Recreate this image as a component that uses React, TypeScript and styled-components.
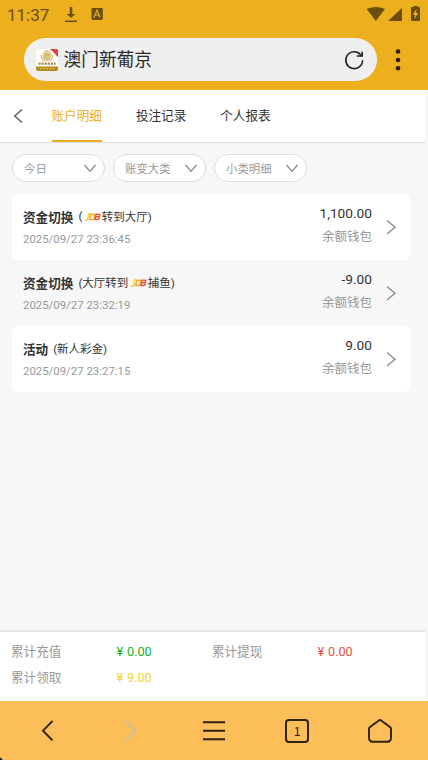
import React from "react";
import styled, { createGlobalStyle } from "styled-components";

const GlobalStyle = createGlobalStyle`
  * { box-sizing: border-box; }
  body {
    margin: 0;
    font-family: Roboto, "Noto Sans CJK SC", sans-serif;
    background: #f7f7f7;
    overflow: hidden;
  }
`;

const Screen = styled.div`
  display: flex;
  flex-direction: column;
  width: 428px;
  height: 760px;
  background: #f7f7f7;
`;

const BrowserTop = styled.header`
  flex: none;
  height: 90px;
  background: #ecb01f;
`;

const StatusBar = styled.div`
  display: flex;
  align-items: center;
  height: 28px;
  padding: 0 8px 0 7px;
  color: #6b4e0b;
`;

const Clock = styled.span`
  width: 57px;
  padding-top: 1px;
  font-size: 17px;
  line-height: 22px;
`;

const StatusIcons = styled.svg`
  display: block;
`;

const StatusSpacer = styled.div`
  flex: 1;
`;

const AddressRow = styled.div`
  display: flex;
  align-items: center;
  padding: 10px 0 0 24px;
`;

const AddressPill = styled.div`
  display: flex;
  align-items: center;
  width: 353px;
  height: 43px;
  padding: 0 12px;
  border-radius: 22px;
  background: #efefef;
`;

const SiteTitle = styled.span`
  flex: 1;
  padding-left: 5.5px;
  color: #292929;
  font-size: 17.7px;
  line-height: 24px;
  font-weight: 400;
  white-space: nowrap;
`;

const MoreButton = styled.button`
  display: flex;
  margin-left: 15px;
  padding: 0;
  border: 0;
  background: none;
`;

const Page = styled.main`
  flex: 1;
  display: flex;
  flex-direction: column;
  width: 425px;
  min-height: 0;
`;

const TabBar = styled.nav`
  display: flex;
  height: 53px;
  padding-left: 13px;
  border-bottom: 1px solid #dedede;
  background: #fff;
`;

const BackButton = styled.button`
  display: flex;
  align-items: center;
  width: 38.5px;
  padding: 0;
  border: 0;
  background: none;
`;

const Tab = styled.a<{ $active?: boolean }>`
  height: 52px;
  margin-right: 34px;
  border-bottom: 2px solid ${(p) => (p.$active ? "#ebae20" : "transparent")};
  color: ${(p) => (p.$active ? "#ebae20" : "#333")};
  font-size: 12.6px;
  line-height: 51px;
  white-space: nowrap;
`;

const Filters = styled.div`
  display: flex;
  gap: 8px;
  padding: 11px 0 12px 11.5px;
`;

const FilterPill = styled.button`
  display: flex;
  align-items: center;
  justify-content: space-between;
  width: 93px;
  height: 28px;
  padding: 1px 7px 0 11.5px;
  border: 1px solid #dedede;
  border-radius: 14px;
  background: #fff;
  color: #999;
  font-family: inherit;
  font-size: 11.4px;
  line-height: 26px;
`;

const Records = styled.div`
  flex: 1;
  width: 398.5px;
  margin-left: 11.5px;
`;

const Record = styled.article<{ $shaded?: boolean }>`
  display: flex;
  height: 66px;
  padding: 0 13px 0 11.5px;
  border-radius: 6px;
  background: ${(p) => (p.$shaded ? "transparent" : "#fff")};
`;

const RecordInfo = styled.div`
  flex: 1;
  padding-top: 12px;
`;

const RecordTitle = styled.div`
  display: flex;
  align-items: center;
  height: 20px;
  color: #333;
  font-size: 11.5px;
  white-space: nowrap;
`;

const RecordKind = styled.strong`
  margin-right: 5px;
  font-size: 12.6px;
  font-weight: 700;
`;

const RecordNote = styled.span`
  display: flex;
  align-items: center;
  height: 18px;
`;

const RecordTime = styled.time`
  display: block;
  padding-top: 6px;
  color: #999;
  font-size: 11.4px;
  line-height: 14px;
`;

const RecordSum = styled.div`
  padding: 9px 12px 0 0;
  text-align: right;
`;

const Amount = styled.div`
  color: #333;
  font-size: 13.7px;
  line-height: 20px;
`;

const Wallet = styled.div`
  padding-top: 4px;
  color: #999;
  font-size: 12.5px;
  line-height: 20px;
`;

const Arrow = styled.svg`
  align-self: center;
`;

const LogoMark = styled.svg`
  display: block;
  margin: 1px 0.5px 0 -1px;
`;

const Totals = styled.section`
  display: grid;
  grid-template-columns: 105.5px 95.5px 105.5px 1fr;
  grid-auto-rows: 26px;
  height: 71px;
  padding: 7px 0 0 11px;
  border-top: 2px solid #e2e2e2;
  background: #fff;
`;

const TotalLabel = styled.span`
  color: #999;
  font-size: 12.6px;
  line-height: 25px;
`;

const TotalValue = styled.span<{ $color: string }>`
  display: flex;
  align-items: center;
  height: 25px;
  color: ${(p) => p.$color};
  font-size: 12.7px;
`;

const Yen = styled.span`
  width: 10.5px;
`;

const BottomNav = styled.nav`
  flex: none;
  display: flex;
  align-items: center;
  height: 59px;
  padding: 0 6px;
  background: linear-gradient(225deg, #fcbe59 calc(100% - 2.5px), #14201c calc(100% - 1.5px));
`;

const NavButton = styled.button`
  flex: 1;
  display: flex;
  justify-content: center;
  padding: 0;
  border: 0;
  background: none;
`;

const TabCount = styled.span`
  width: 24px;
  height: 24px;
  border: 2px solid #2c2311;
  border-radius: 4px;
  color: #2c2311;
  font: 12.5px/19px "Noto Sans CJK SC", sans-serif;
`;

const SiteLogo = () => (
  <svg width="22" height="22" viewBox="0 0 22 22">
    <rect width="22" height="22" rx="2" fill="#fffdf6" />
    <path d="M14 0h6q2 0 2 2v6z" fill="#d72835" />
    <path d="M16 1l5 5M18 0l4 4" stroke="#f4b1aa" strokeWidth=".6" />
    <ellipse cx="11" cy="6.5" rx="4" ry="5" fill="#f2e5b6" stroke="#c6aa58" strokeWidth=".8" />
    <path d="M9 4v6M11 3v8M13 4v6M9 6h4M5 6q0 5 4 6.3M17 6q0 5-4 6.3" fill="none" stroke="#b99a43" strokeWidth=".8" />
    <path d="M2.5 14.7h17" stroke="#a38c55" strokeWidth="2.2" strokeDasharray="2.2 .9" />
    <path d="M0 17.5h22v2.5q0 2-2 2H2q-2 0-2-2z" fill="#b48c1c" />
    <path d="M4 19.7h14" stroke="#d9b950" strokeWidth="1.2" strokeDasharray="2 1" />
  </svg>
);

const JdbLogo = () => (
  <LogoMark width="17" height="11" viewBox="0 0 17 11">
    <g fill="none" strokeWidth="1.4">
      <path d="M5.2 1.8L3.8 8Q3.3 9.8 1 9.6" stroke="#fac51c" />
      <path d="M6.9 3.2h3q1 0 .8 1.3l-.6 2.8q-.3 1.2-1.4 1.2h-3z" stroke="#f8a824" />
      <path d="M12.1 3.2h2.9q1.1 0 .9 1.1-.2 1.3-1.3 1.4h-2.8 2.5q1.2.1 1 1.3-.3 1.5-1.5 1.5h-2.9z" stroke="#ec5340" />
    </g>
  </LogoMark>
);

const Chevron = () => (
  <svg width="14" height="9" viewBox="0 0 14 9">
    <path d="M1.5 1L7 7.3 12.5 1" fill="none" stroke="#858585" strokeWidth="1.2" />
  </svg>
);

type Entry = {
  kind: string;
  before: string;
  logo?: boolean;
  after?: string;
  time: string;
  amount: string;
};

const entries: Entry[] = [
  { kind: "资金切换", before: "(\u00a0", logo: true, after: "转到大厅)", time: "2025/09/27 23:36:45", amount: "1,100.00" },
  { kind: "资金切换", before: "(大厅转到\u00a0", logo: true, after: "捕鱼)", time: "2025/09/27 23:32:19", amount: "-9.00" },
  { kind: "活动", before: "(新人彩金)", time: "2025/09/27 23:27:15", amount: "9.00" },
];

const totals = [
  { label: "累计充值", value: "0.00", color: "#13b51c" },
  { label: "累计提现", value: "0.00", color: "#e35247" },
  { label: "累计领取", value: "9.00", color: "#f4d329" },
];

export default function App() {
  return (
    <Screen>
      <GlobalStyle />
      <BrowserTop>
        <StatusBar>
          <Clock>11:37</Clock>
          <StatusIcons width="40" height="28" viewBox="0 0 40 28">
            <path d="M1 21.3h12" stroke="currentColor" strokeWidth="1.5" fill="none" />
            <path d="M5.7 7h2.6v7h3L7 18l-4.3-4h3z" fill="currentColor" />
            <rect x="27.5" y="8" width="11.3" height="12" rx="1" fill="currentColor" />
            <path d="M30 17.5l3-7.5 3 7.5M31 15h4" stroke="#ecb01f" strokeWidth="1.2" fill="none" />
          </StatusIcons>
          <StatusSpacer />
          <StatusIcons width="54" height="28" viewBox="0 0 54 28">
            <path d="M.7 9Q9.8 5 18.9 9L9.8 21zM36 8v13H22z" fill="currentColor" />
            <path d="M45 8q0-1 1-1h1.5V6h4v1H53q1 0 1 1v12q0 1-1 1h-7q-1 0-1-1z" fill="currentColor" />
            <path d="M50.3 9l-3.5 6h2.1l-.4 4 3.7-6h-2z" fill="#ecb01f" />
          </StatusIcons>
        </StatusBar>
        <AddressRow>
          <AddressPill>
            <SiteLogo />
            <SiteTitle>澳门新葡京</SiteTitle>
            <svg width="22" height="22" viewBox="0 0 22 22">
              <path d="M19.6 11.2A8.4 8.4 0 1 1 17.5 5.6L19.2 7" fill="none" stroke="#242424" strokeWidth="1.6" />
              <path d="M19.2 2.7V7h-5.4" fill="none" stroke="#242424" strokeWidth="1.6" />
            </svg>
          </AddressPill>
          <MoreButton aria-label="menu">
            <svg width="12" height="24" viewBox="0 0 12 24" fill="#272212">
              <circle cx="6" cy="3.5" r="2.3" />
              <circle cx="6" cy="12" r="2.3" />
              <circle cx="6" cy="20.3" r="2.3" />
            </svg>
          </MoreButton>
        </AddressRow>
      </BrowserTop>

      <Page>
        <TabBar>
          <BackButton aria-label="back">
            <svg width="12" height="16" viewBox="0 0 12 16">
              <path d="M9 1.5L1.8 8 9 14.5" fill="none" stroke="#666" strokeWidth="1.6" />
            </svg>
          </BackButton>
          <Tab $active>账户明细</Tab>
          <Tab>投注记录</Tab>
          <Tab>个人报表</Tab>
        </TabBar>

        <Filters>
          {["今日", "账变大类", "小类明细"].map((name) => (
            <FilterPill key={name}>
              {name}
              <Chevron />
            </FilterPill>
          ))}
        </Filters>

        <Records>
          {entries.map((e, i) => (
            <Record key={e.time} $shaded={i % 2 === 1}>
              <RecordInfo>
                <RecordTitle>
                  <RecordKind>{e.kind}</RecordKind>
                  <RecordNote>
                    {e.before}
                    {e.logo && <JdbLogo />}
                    {e.after}
                  </RecordNote>
                </RecordTitle>
                <RecordTime>{e.time}</RecordTime>
              </RecordInfo>
              <RecordSum>
                <Amount>{e.amount}</Amount>
                <Wallet>余额钱包</Wallet>
              </RecordSum>
              <Arrow width="13" height="18" viewBox="0 0 13 18">
                <path d="M3 2.5L11 9.2 3 16" fill="none" stroke="#909090" strokeWidth="1.5" />
              </Arrow>
            </Record>
          ))}
        </Records>

        <Totals>
          {totals.map((t) => (
            <React.Fragment key={t.label}>
              <TotalLabel>{t.label}</TotalLabel>
              <TotalValue $color={t.color}>
                <Yen>¥</Yen>
                {t.value}
              </TotalValue>
            </React.Fragment>
          ))}
        </Totals>
      </Page>

      <BottomNav>
        <NavButton aria-label="back">
          <svg width="24" height="24" viewBox="0 0 24 24">
            <path d="M16.5 2L7 11.7l9.5 9.7" fill="none" stroke="#2c2311" strokeWidth="1.9" />
          </svg>
        </NavButton>
        <NavButton aria-label="forward">
          <svg width="24" height="24" viewBox="0 0 24 24">
            <path d="M7 2l9.5 9.7L7 21.4" fill="none" stroke="#cdbf9c" strokeWidth="1.9" />
          </svg>
        </NavButton>
        <NavButton aria-label="menu">
          <svg width="24" height="24" viewBox="0 0 24 24">
            <path d="M1 3.3h22M1 11.8h22M1 20.2h22" stroke="#2c2311" strokeWidth="1.9" />
          </svg>
        </NavButton>
        <NavButton aria-label="tabs">
          <TabCount>1</TabCount>
        </NavButton>
        <NavButton aria-label="home">
          <svg width="24" height="24" viewBox="0 0 24 24">
            <path d="M1 9.8Q1 8.8 2 8l8.5-6.3q1.5-1.2 3 0L22 8q1 .8 1 1.8v9q0 4-4 4H5q-4 0-4-4z" fill="none" stroke="#2c2311" strokeWidth="1.9" />
          </svg>
        </NavButton>
      </BottomNav>
    </Screen>
  );
}
